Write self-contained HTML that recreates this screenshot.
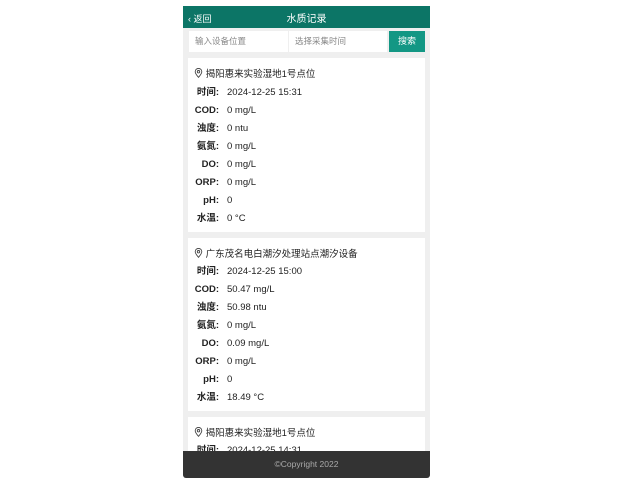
<!DOCTYPE html>
<html><head><meta charset="utf-8"><style>
*{margin:0;padding:0;box-sizing:border-box}
body{width:640px;height:480px;background:#fff;font-family:"Liberation Sans","Noto Sans CJK SC",sans-serif;font-size:10px;color:#222;position:relative;overflow:hidden}
#app{position:absolute;left:183px;top:6px;width:247px;height:472px;background:#efefef;overflow:hidden;border-radius:0 0 3px 3px}
.hd{position:absolute;left:0;top:0;width:247px;height:22px;background:#0c7566;color:#fff;line-height:22px}
.hd .b{position:absolute;left:5px;top:2px;font-size:9px;height:22px;line-height:22px}
.hd .t{position:absolute;left:0;right:0;top:3px;text-align:center;font-size:10px;height:22px;line-height:22px}
.in{position:absolute;top:25px;height:21px;background:#fff;color:#888;font-size:8.5px;line-height:21px;padding-left:6px}
.btn{position:absolute;left:206px;top:25px;width:36px;height:21px;background:#139784;color:#fff;font-size:9px;line-height:21px;text-align:center}
.card{position:absolute;left:5px;width:237px;background:#fff}
.tt{position:absolute;left:6px;top:10px;height:12px;line-height:12px;font-size:9.5px;white-space:nowrap}
.r{position:absolute;left:0;width:230px;height:12px;font-size:9.5px;white-space:nowrap}
.r b{position:absolute;left:0;top:0;width:31px;height:12px;line-height:12px;text-align:right;font-weight:bold}
.r span{position:absolute;left:39px;top:0;height:12px;line-height:12px}
.ft{position:absolute;left:0;top:445px;width:247px;height:27px;background:#333;color:#aaa;font-size:8.5px;text-align:center;line-height:27px}
svg{vertical-align:-1px}
</style></head><body><div id="app">
<div class="hd"><span class="b">&lsaquo; 返回</span><div class="t">水质记录</div></div>
<div class="in" style="left:6px;width:99px">输入设备位置</div>
<div class="in" style="left:106px;width:98px">选择采集时间</div>
<div class="btn">搜索</div>

<div class="card" style="top:52px;height:174px">
<div class="tt"><svg width="9" height="10" viewBox="0 0 9 10"><path d="M4.5 9.3C2.5 7 1.2 5.3 1.2 3.7a3.3 3.3 0 0 1 6.6 0C7.8 5.3 6.5 7 4.5 9.3z" fill="none" stroke="#444" stroke-width="0.9"/><circle cx="4.5" cy="3.7" r="1.2" fill="none" stroke="#444" stroke-width="0.9"/></svg> 揭阳惠来实验湿地1号点位</div>
<div class="r" style="top:29px"><b>时间:</b><span>2024-12-25 15:31</span></div>
<div class="r" style="top:47px"><b>COD:</b><span>0 mg/L</span></div>
<div class="r" style="top:65px"><b>浊度:</b><span>0 ntu</span></div>
<div class="r" style="top:83px"><b>氨氮:</b><span>0 mg/L</span></div>
<div class="r" style="top:101px"><b>DO:</b><span>0 mg/L</span></div>
<div class="r" style="top:119px"><b>ORP:</b><span>0 mg/L</span></div>
<div class="r" style="top:137px"><b>pH:</b><span>0</span></div>
<div class="r" style="top:155px"><b>水温:</b><span>0 °C</span></div>
</div>

<div class="card" style="top:232px;height:173px">
<div class="tt"><svg width="9" height="10" viewBox="0 0 9 10"><path d="M4.5 9.3C2.5 7 1.2 5.3 1.2 3.7a3.3 3.3 0 0 1 6.6 0C7.8 5.3 6.5 7 4.5 9.3z" fill="none" stroke="#444" stroke-width="0.9"/><circle cx="4.5" cy="3.7" r="1.2" fill="none" stroke="#444" stroke-width="0.9"/></svg> 广东茂名电白潮汐处理站点潮汐设备</div>
<div class="r" style="top:28px"><b>时间:</b><span>2024-12-25 15:00</span></div>
<div class="r" style="top:46px"><b>COD:</b><span>50.47 mg/L</span></div>
<div class="r" style="top:64px"><b>浊度:</b><span>50.98 ntu</span></div>
<div class="r" style="top:82px"><b>氨氮:</b><span>0 mg/L</span></div>
<div class="r" style="top:100px"><b>DO:</b><span>0.09 mg/L</span></div>
<div class="r" style="top:118px"><b>ORP:</b><span>0 mg/L</span></div>
<div class="r" style="top:136px"><b>pH:</b><span>0</span></div>
<div class="r" style="top:154px"><b>水温:</b><span>18.49 °C</span></div>
</div>

<div class="card" style="top:411px;height:60px">
<div class="tt"><svg width="9" height="10" viewBox="0 0 9 10"><path d="M4.5 9.3C2.5 7 1.2 5.3 1.2 3.7a3.3 3.3 0 0 1 6.6 0C7.8 5.3 6.5 7 4.5 9.3z" fill="none" stroke="#444" stroke-width="0.9"/><circle cx="4.5" cy="3.7" r="1.2" fill="none" stroke="#444" stroke-width="0.9"/></svg> 揭阳惠来实验湿地1号点位</div>
<div class="r" style="top:28px"><b>时间:</b><span>2024-12-25 14:31</span></div>
</div>

<div class="ft">©Copyright 2022</div>
</div></body></html>
